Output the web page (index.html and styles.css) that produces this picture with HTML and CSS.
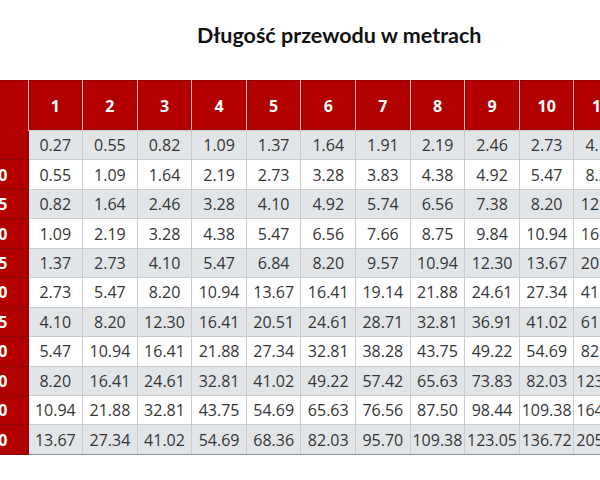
FILE: index.html
```html
<!DOCTYPE html>
<html lang="pl">
<head>
<meta charset="utf-8">
<link rel="stylesheet" href="styles.css">
</head>
<body>
<div class="page">
  <h1 class="title">Długość przewodu w metrach</h1>
  <table class="grid">
    <colgroup>
      <col class="c-head">
      <col class="c-data" span="11">
    </colgroup>
    <thead>
      <tr>
        <th class="corner"></th>
        <th>1</th><th>2</th><th>3</th><th>4</th><th>5</th><th>6</th><th>7</th><th>8</th><th>9</th><th>10</th><th>11</th>
      </tr>
    </thead>
    <tbody>
      <tr><th></th><td>0.27</td><td>0.55</td><td>0.82</td><td>1.09</td><td>1.37</td><td>1.64</td><td>1.91</td><td>2.19</td><td>2.46</td><td>2.73</td><td>4.10</td></tr>
      <tr><th>10</th><td>0.55</td><td>1.09</td><td>1.64</td><td>2.19</td><td>2.73</td><td>3.28</td><td>3.83</td><td>4.38</td><td>4.92</td><td>5.47</td><td>8.20</td></tr>
      <tr><th>15</th><td>0.82</td><td>1.64</td><td>2.46</td><td>3.28</td><td>4.10</td><td>4.92</td><td>5.74</td><td>6.56</td><td>7.38</td><td>8.20</td><td>12.30</td></tr>
      <tr><th>20</th><td>1.09</td><td>2.19</td><td>3.28</td><td>4.38</td><td>5.47</td><td>6.56</td><td>7.66</td><td>8.75</td><td>9.84</td><td>10.94</td><td>16.41</td></tr>
      <tr><th>25</th><td>1.37</td><td>2.73</td><td>4.10</td><td>5.47</td><td>6.84</td><td>8.20</td><td>9.57</td><td>10.94</td><td>12.30</td><td>13.67</td><td>20.51</td></tr>
      <tr><th>50</th><td>2.73</td><td>5.47</td><td>8.20</td><td>10.94</td><td>13.67</td><td>16.41</td><td>19.14</td><td>21.88</td><td>24.61</td><td>27.34</td><td>41.02</td></tr>
      <tr><th>75</th><td>4.10</td><td>8.20</td><td>12.30</td><td>16.41</td><td>20.51</td><td>24.61</td><td>28.71</td><td>32.81</td><td>36.91</td><td>41.02</td><td>61.52</td></tr>
      <tr><th>100</th><td>5.47</td><td>10.94</td><td>16.41</td><td>21.88</td><td>27.34</td><td>32.81</td><td>38.28</td><td>43.75</td><td>49.22</td><td>54.69</td><td>82.03</td></tr>
      <tr><th>150</th><td>8.20</td><td>16.41</td><td>24.61</td><td>32.81</td><td>41.02</td><td>49.22</td><td>57.42</td><td>65.63</td><td>73.83</td><td>82.03</td><td>123.05</td></tr>
      <tr><th>200</th><td>10.94</td><td>21.88</td><td>32.81</td><td>43.75</td><td>54.69</td><td>65.63</td><td>76.56</td><td>87.50</td><td>98.44</td><td>109.38</td><td>164.06</td></tr>
      <tr><th>250</th><td>13.67</td><td>27.34</td><td>41.02</td><td>54.69</td><td>68.36</td><td>82.03</td><td>95.70</td><td>109.38</td><td>123.05</td><td>136.72</td><td>205.08</td></tr>
    </tbody>
  </table>
</div>
</body>
</html>
```
FILE: styles.css
```css
html, body {
  margin: 0;
  padding: 0;
  background: #ffffff;
}

.page {
  width: 600px;
  height: 480px;
  overflow: hidden;
}

.title {
  margin: 0;
  padding: 21px 0 0 197px;
  height: 58px;
  box-sizing: border-box;
  font-family: "Lato", "Open Sans", sans-serif;
  font-weight: 700;
  font-size: 21.5px;
  line-height: 28px;
  color: #111111;
  white-space: nowrap;
}

.grid {
  margin: 22px 0 0 -27px;
  border-collapse: collapse;
  table-layout: fixed;
  width: 655.6px;
  font-family: "Open Sans", sans-serif;
  font-size: 16px;
}

.c-head {
  width: 55px;
}

.c-data {
  width: 54.6px;
}

.grid th,
.grid td {
  padding: 0;
  text-align: center;
  white-space: nowrap;
  overflow: hidden;
}

.grid thead th {
  height: 49px;
  background: #b20000;
  color: #ffffff;
  font-weight: 700;
  font-size: 16px;
  border-left: 1px solid #e9b4b4;
  border-right: 1px solid #e9b4b4;
  border-top: 1px solid #8c0000;
}

.grid thead th.corner {
  border-left: none;
}

.grid tbody th {
  height: 28.45px;
  padding-right: 20px;
  text-align: right;
  background: #b20000;
  color: #ffffff;
  font-weight: 700;
  font-size: 16px;
  border-bottom: 1px solid #8a0a0a;
  border-right: 1px solid #8a0a0a;
}

.grid tbody td {
  height: 28.45px;
  color: #353535;
  border: 1px solid #c9cbce;
  background: #ffffff;
}

.grid tbody tr:nth-child(odd) td {
  background: #e2e5e8;
}

.grid tbody tr:last-child td {
  border-bottom: 1px solid #8c8f93;
}
```
